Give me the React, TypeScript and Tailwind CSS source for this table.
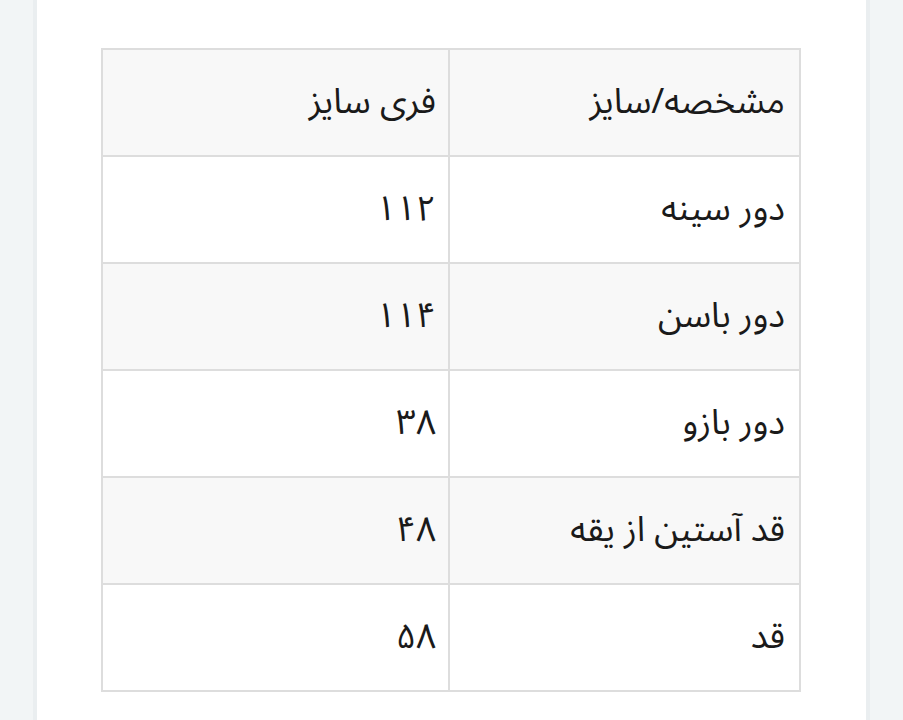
import React from "react";

const rows: [string, string][] = [
  ["دور سینه", "۱۱۲"],
  ["دور باسن", "۱۱۴"],
  ["دور بازو", "۳۸"],
  ["قد آستین از یقه", "۴۸"],
  ["قد", "۵۸"],
];

export default function App() {
  return (
    <div
      className="flex h-[720px] w-[903px] overflow-hidden bg-white"
      style={{ fontFamily: '"Noto Sans Arabic", "Vazirmatn", "DejaVu Sans", sans-serif' }}
    >
      <div className="h-full w-[37px] shrink-0 border-r-[4px] border-[#eaeef0] bg-[#f2f5f6]" />
      <div className="h-full flex-1 bg-white pl-[64px] pr-[65px] pt-[48px]">
        <table dir="rtl" className="w-full border-collapse text-[35px] leading-none text-[#1a1a1a]">
          <tbody>
            <tr className="bg-[#f8f8f8]">
              <td className="h-[107px] w-[351px] border-2 border-[#dddddd] pr-[14px] text-right align-middle">
                مشخصه/سایز
              </td>
              <td className="h-[107px] border-2 border-[#dddddd] pr-[12px] text-right align-middle">
                فری سایز
              </td>
            </tr>
            {rows.map(([k, v], i) => (
              <tr key={k} className={i % 2 === 1 ? "bg-[#f8f8f8]" : "bg-white"}>
                <td className="h-[107px] border-2 border-[#dddddd] pr-[14px] text-right align-middle">
                  {k}
                </td>
                <td className="h-[107px] border-2 border-[#dddddd] pr-[12px] text-right align-middle">
                  {v}
                </td>
              </tr>
            ))}
          </tbody>
        </table>
      </div>
      <div className="h-full w-[37px] shrink-0 border-l-[4px] border-[#eaeef0] bg-[#f2f5f6]" />
    </div>
  );
}
